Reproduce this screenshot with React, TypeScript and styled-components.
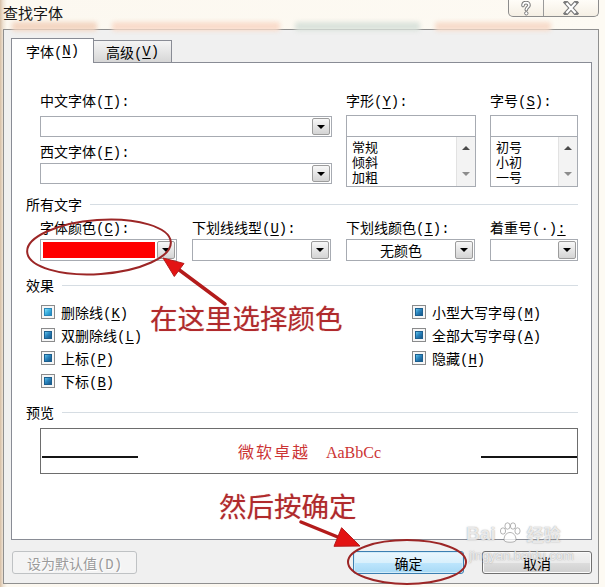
import React from 'react';
import styled, { createGlobalStyle } from 'styled-components';

const UI = `"Liberation Mono", "Noto Sans CJK SC", monospace`;
const CJK = `"Noto Sans CJK SC", sans-serif`;

const GlobalStyle = createGlobalStyle`
  html, body { margin: 0; padding: 0; background: #fcf8f0; }
  * { box-sizing: border-box; }
`;

const Screen = styled.div`
  position: relative;
  width: 605px;
  height: 587px;
  overflow: hidden;
  display: flex;
  flex-direction: column;
  background: linear-gradient(90deg, #d6bea5 0px, #efe3d4 3px, #fcf8f0 7px, #fdfaf3 100%);
  font-family: ${UI};
  font-size: 14px;
  color: #000;
`;

const TitleBar = styled.div`
  flex: none;
  height: 29px;
  display: flex;
  flex-direction: column;
`;

const TitleRow = styled.div`
  height: 21px;
  display: flex;
  justify-content: space-between;
  align-items: flex-start;
  padding: 0 6px 0 3px;
`;

const Title = styled.div`
  font-family: ${CJK};
  font-size: 15px;
  line-height: 20px;
  padding-top: 3px;
  color: #141414;
`;

const CaptionGroup = styled.div`
  display: flex;
  height: 17px;
  border: 1px solid #8c8c8c;
  border-top: none;
  border-radius: 0 0 5px 5px;
  background: linear-gradient(#fffdf8, #f5efe4);
  overflow: hidden;
`;

const CaptionButton = styled.div<{ $w: number }>`
  width: ${(p) => p.$w}px;
  display: flex;
  align-items: center;
  justify-content: center;
  & + & {
    border-left: 1px solid #9a9a9a;
  }
`;

const Backdrop = styled.div`
  height: 8px;
  display: flex;
  align-items: flex-start;
  gap: 15px;
  padding-left: 12px;
`;

const BackdropChip = styled.div<{ $w: number; $c: string }>`
  width: ${(p) => p.$w}px;
  height: 9px;
  margin-top: 1px;
  background: ${(p) => p.$c};
  filter: blur(2px);
  border-radius: 3px;
`;

const Frame = styled.div`
  flex: 1;
  margin: 0 6px 3px 3px;
  border: 1px solid #8f8f8f;
  background: #f0f0f0;
  display: flex;
  flex-direction: column;
  padding: 8px 6px 9px 7px;
`;

const TabStrip = styled.div`
  flex: none;
  height: 25px;
  margin-bottom: -1px;
  display: flex;
  align-items: flex-end;
  position: relative;
  z-index: 1;
`;

const Tab = styled.div<{ $active?: boolean }>`
  display: flex;
  align-items: center;
  justify-content: center;
  white-space: nowrap;
  border: 1px solid #898c95;
  ${(p) =>
    p.$active
      ? `
    width: 83px;
    height: 25px;
    border-bottom: none;
    background: #fff;
  `
      : `
    width: 78px;
    height: 22px;
    margin-bottom: 1px;
    border-left: none;
    border-bottom: none;
    background: linear-gradient(#f4f4f4, #e6e6e6 50%, #d6d6d6);
  `}
`;

const Panel = styled.div`
  flex: 1;
  background: #fff;
  border: 1px solid #898c95;
  display: flex;
  flex-direction: column;
  padding: 0 13px 0 14px;
`;

const FontGrid = styled.div`
  margin: 31px 0 0 14px;
  display: grid;
  grid-template-columns: 292px 130px 88px;
  column-gap: 14px;
`;

const FieldColumn = styled.div`
  display: flex;
  flex-direction: column;
  min-width: 0;
`;

const FieldLabel = styled.div<{ $mt?: number }>`
  height: 16px;
  line-height: 16px;
  white-space: nowrap;
  margin-top: ${(p) => p.$mt ?? 0}px;
`;

const Key = styled.span`
  text-decoration: underline;
  text-underline-offset: 2px;
`;

const Combo = styled.div<{ $h: number; $mt: number }>`
  height: ${(p) => p.$h}px;
  margin-top: ${(p) => p.$mt}px;
  border: 1px solid #a7abb2;
  background: #fff;
  display: flex;
  align-items: stretch;
  padding: 1px;
`;

const ComboValue = styled.div<{ $center?: boolean }>`
  flex: 1;
  display: flex;
  align-items: center;
  justify-content: ${(p) => (p.$center ? 'center' : 'flex-start')};
  font-family: ${CJK};
  font-size: 14px;
  padding: 1px 2px 1px 1px;
`;

const ColorSwatch = styled.div<{ $color: string }>`
  flex: 1;
  align-self: stretch;
  margin: 1px 2px 1px 1px;
  background: ${(p) => p.$color};
`;

const DropButton = styled.div`
  width: 18px;
  border: 1px solid #9c9c9c;
  border-radius: 2px;
  background: linear-gradient(#f8f8f8, #e4e4e4 55%, #d4d4d4);
  display: flex;
  align-items: center;
  justify-content: center;
`;

const Caret = styled.span`
  width: 0;
  height: 0;
  border-left: 4px solid transparent;
  border-right: 4px solid transparent;
  border-top: 4px solid #000;
`;

const TextBox = styled.div<{ $mt: number }>`
  height: 22px;
  margin-top: ${(p) => p.$mt}px;
  border: 1px solid #a7abb2;
  background: #fff;
`;

const ListBox = styled.div`
  height: 51px;
  margin-top: -1px;
  border: 1px solid #a7abb2;
  background: #fff;
  display: flex;
`;

const ListItems = styled.div`
  flex: 1;
  padding: 2px 0 0 5px;
  font-family: ${CJK};
  font-size: 13px;
  line-height: 15px;
`;

const ScrollColumn = styled.div`
  width: 19px;
  background: #f3f3f3;
  border-left: 1px solid #e2e2e2;
  display: flex;
  flex-direction: column;
  justify-content: space-between;
  align-items: center;
  padding: 9px 0 10px;
`;

const ScrollArrow = styled.span<{ $up?: boolean }>`
  width: 0;
  height: 0;
  border-left: 4px solid transparent;
  border-right: 4px solid transparent;
  ${(p) => (p.$up ? 'border-bottom: 4px solid #4a4a4a;' : 'border-top: 4px solid #8c8c8c;')}
`;

const SectionHeader = styled.div<{ $mt: number }>`
  margin-top: ${(p) => p.$mt}px;
  height: 16px;
  line-height: 16px;
  display: flex;
  align-items: center;
  gap: 8px;
  font-family: ${CJK};
  font-size: 14px;
`;

const Rule = styled.div`
  flex: 1;
  height: 1px;
  background: #d6dde3;
`;

const ColorRow = styled.div`
  margin: 9px 0 0 14px;
  display: flex;
  justify-content: space-between;
`;

const ColorField = styled.div<{ $w: number }>`
  width: ${(p) => p.$w}px;
  display: flex;
  flex-direction: column;
`;

const Effects = styled.div`
  margin: 7px 0 0 14px;
  display: flex;
`;

const EffectColumn = styled.div<{ $w?: number }>`
  ${(p) => (p.$w ? `width: ${p.$w}px;` : 'flex: 1;')}
  display: flex;
  flex-direction: column;
`;

const EffectRow = styled.div`
  height: 23px;
  display: flex;
  align-items: center;
  gap: 6px;
  padding-left: 1px;
  white-space: nowrap;
`;

const CheckBox = styled.span<{ $hot?: boolean }>`
  width: 14px;
  height: 14px;
  border: 1px solid #8a8b8c;
  background: #f6f6f6;
  padding: 2px;
  display: flex;
  &::after {
    content: '';
    flex: 1;
    border: 1px solid ${(p) => (p.$hot ? '#2a86b8' : '#1d5f8e')};
    background: ${(p) =>
      p.$hot
        ? 'linear-gradient(135deg, #8fe2f8 0%, #3fb4e2 45%, #1f86c0 100%)'
        : 'linear-gradient(135deg, #62c3e8 0%, #2a84be 45%, #175889 100%)'};
  }
`;

const PreviewBox = styled.div`
  margin: 8px 0 0 14px;
  height: 46px;
  border: 1px solid #6d6d6d;
  display: flex;
  align-items: flex-start;
  padding-left: 1px;
`;

const BaseLine = styled.div`
  width: 96px;
  margin-top: 27px;
  border-top: 2px solid #151515;
`;

const SampleText = styled.div`
  flex: 1;
  display: flex;
  justify-content: center;
  align-items: baseline;
  gap: 18px;
  margin-top: 12px;
  line-height: 20px;
  color: #cc3434;
  white-space: nowrap;
`;

const SampleCjk = styled.span`
  font-family: ${CJK};
  font-size: 16px;
  letter-spacing: 2px;
  margin-right: -2px;
`;

const SampleLatin = styled.span`
  font-family: "Liberation Serif", serif;
  font-size: 16px;
`;

const ButtonRow = styled.div`
  flex: none;
  margin-top: 11px;
  height: 23px;
  display: flex;
`;

const DialogButton = styled.div<{ $w: number; $kind: 'disabled' | 'default' | 'normal'; $ml?: string }>`
  width: ${(p) => p.$w}px;
  height: 23px;
  margin-left: ${(p) => p.$ml ?? '0'};
  display: flex;
  align-items: center;
  justify-content: center;
  border-radius: 3px;
  white-space: nowrap;
  font-size: 14px;
  ${(p) =>
    p.$kind === 'disabled'
      ? `
    border: 1px solid #bfc2c4;
    background: #f4f4f4;
    color: #9a9a9a;
    text-shadow: 1px 1px 0 #ffffff;
  `
      : p.$kind === 'default'
      ? `
    border: 1px solid #3c7fb1;
    box-shadow: inset 0 0 0 1px #d2ecf9;
    background: linear-gradient(#eaf6fd 0%, #d9f0fc 50%, #bee6fd 50%, #a7d9f5 100%);
    color: #000;
  `
      : `
    border: 1px solid #707070;
    box-shadow: inset 0 0 0 1px #fbfbfb;
    background: linear-gradient(#f2f2f2 0%, #ebebeb 50%, #dddddd 50%, #cfcfcf 100%);
    color: #000;
  `}
`;

const Overlay = styled.svg`
  position: absolute;
  left: 0;
  top: 0;
  pointer-events: none;
`;

const Annotation = styled.div<{ $x: number; $y: number }>`
  position: absolute;
  left: ${(p) => p.$x}px;
  top: ${(p) => p.$y}px;
  font-family: ${CJK};
  font-size: 27.5px;
  line-height: 28px;
  color: #b02a2c;
  white-space: nowrap;
  text-shadow: 0 0 1px rgba(176, 42, 44, 0.4);
`;

const Watermark = styled.div`
  position: absolute;
  left: 466px;
  top: 521px;
  display: flex;
  flex-direction: column;
  color: rgba(255, 255, 255, 0.75);
  text-shadow: 0 0 1px rgba(110, 110, 110, 0.55), 0 0 2px rgba(150, 150, 150, 0.35);
  pointer-events: none;
`;

const WatermarkTop = styled.div`
  display: flex;
  align-items: flex-end;
  gap: 2px;
  font-family: "Liberation Sans", sans-serif;
  font-weight: bold;
  font-size: 19px;
  line-height: 22px;
`;

const WatermarkCn = styled.span`
  font-family: ${CJK};
  font-size: 17px;
  font-weight: bold;
  margin-left: 3px;
`;

const WatermarkUrl = styled.div`
  font-family: "Liberation Sans", sans-serif;
  font-size: 13px;
  line-height: 16px;
  margin-top: 3px;
  padding-left: 3px;
`;

const HelpIcon = () => (
  <svg width="12" height="15" viewBox="0 0 12 15">
    <path
      d="M3 4.6 C3 2.2 4.5 1.6 6 1.6 C7.6 1.6 9 2.3 9 4.2 C9 6.2 6.3 6.4 6.3 8.8"
      fill="none"
      stroke="#7b7b7b"
      strokeWidth="3.6"
      strokeLinecap="round"
    />
    <path
      d="M3 4.6 C3 2.2 4.5 1.6 6 1.6 C7.6 1.6 9 2.3 9 4.2 C9 6.2 6.3 6.4 6.3 8.8"
      fill="none"
      stroke="#ffffff"
      strokeWidth="1.6"
      strokeLinecap="round"
    />
    <circle cx="6.3" cy="12.3" r="1.7" fill="#fff" stroke="#7b7b7b" strokeWidth="1" />
  </svg>
);

const CloseIcon = () => (
  <svg width="16" height="14" viewBox="0 0 16 14">
    <path d="M3 1.5 L13 12.5 M13 1.5 L3 12.5" stroke="#7b7b7b" strokeWidth="4.4" strokeLinecap="square" fill="none" />
    <path d="M3.4 2 L12.6 12 M12.6 2 L3.4 12" stroke="#ffffff" strokeWidth="2.2" strokeLinecap="butt" fill="none" />
  </svg>
);

const PawIcon = () => (
  <svg width="24" height="24" viewBox="0 0 24 24">
    <g fill="rgba(255,255,255,0.75)" stroke="rgba(120,120,120,0.55)" strokeWidth="1">
      <ellipse cx="5" cy="10" rx="2.6" ry="3.2" />
      <ellipse cx="9.5" cy="5" rx="2.6" ry="3.2" />
      <ellipse cx="15" cy="5" rx="2.6" ry="3.2" />
      <ellipse cx="19.5" cy="10" rx="2.6" ry="3.2" />
      <path d="M6 19 C6 14 9 11.5 12 11.5 C15 11.5 18 14 18 19 C18 22 6 22 6 19 Z" />
    </g>
  </svg>
);

const Dropdown = ({ h, mt, children, center }: { h: number; mt: number; children?: React.ReactNode; center?: boolean }) => (
  <Combo $h={h} $mt={mt}>
    <ComboValue $center={center}>{children}</ComboValue>
    <DropButton>
      <Caret />
    </DropButton>
  </Combo>
);

const ListField = ({ label, items }: { label: React.ReactNode; items: string[] }) => (
  <FieldColumn>
    <FieldLabel>{label}</FieldLabel>
    <TextBox $mt={5} />
    <ListBox>
      <ListItems>
        {items.map((it) => (
          <div key={it}>{it}</div>
        ))}
      </ListItems>
      <ScrollColumn>
        <ScrollArrow $up />
        <ScrollArrow />
      </ScrollColumn>
    </ListBox>
  </FieldColumn>
);

const Effect = ({ text, k, hot }: { text: string; k: string; hot?: boolean }) => (
  <EffectRow>
    <CheckBox $hot={hot} />
    <span>
      {text}(<Key>{k}</Key>)
    </span>
  </EffectRow>
);

export default function App() {
  return (
    <Screen>
      <GlobalStyle />
      <TitleBar>
        <TitleRow>
          <Title>查找字体</Title>
          <CaptionGroup>
            <CaptionButton $w={34}>
              <HelpIcon />
            </CaptionButton>
            <CaptionButton $w={55}>
              <CloseIcon />
            </CaptionButton>
          </CaptionGroup>
        </TitleRow>
        <Backdrop>
          <BackdropChip $w={85} $c="#f3d6c2" />
          <BackdropChip $w={168} $c="#f9dccb" />
          <BackdropChip $w={125} $c="#dbe3dc" />
          <BackdropChip $w={116} $c="#f7dccb" />
        </Backdrop>
      </TitleBar>

      <Frame>
        <TabStrip>
          <Tab $active>
            字体(<Key>N</Key>)
          </Tab>
          <Tab>
            高级(<Key>V</Key>)
          </Tab>
        </TabStrip>

        <Panel>
          <FontGrid>
            <FieldColumn>
              <FieldLabel>
                中文字体(<Key>T</Key>):
              </FieldLabel>
              <Dropdown h={21} mt={6} />
              <FieldLabel $mt={8}>
                西文字体(<Key>F</Key>):
              </FieldLabel>
              <Dropdown h={21} mt={2} />
            </FieldColumn>
            <ListField
              label={
                <>
                  字形(<Key>Y</Key>):
                </>
              }
              items={['常规', '倾斜', '加粗']}
            />
            <ListField
              label={
                <>
                  字号(<Key>S</Key>):
                </>
              }
              items={['初号', '小初', '一号']}
            />
          </FontGrid>

          <SectionHeader $mt={9}>
            <span>所有文字</span>
            <Rule />
          </SectionHeader>

          <ColorRow>
            <ColorField $w={137}>
              <FieldLabel>
                字体颜色(<Key>C</Key>):
              </FieldLabel>
              <Combo $h={22} $mt={2}>
                <ColorSwatch $color="#ff0000" />
                <DropButton>
                  <Caret />
                </DropButton>
              </Combo>
            </ColorField>
            <ColorField $w={139}>
              <FieldLabel>
                下划线线型(<Key>U</Key>):
              </FieldLabel>
              <Dropdown h={22} mt={2} />
            </ColorField>
            <ColorField $w={129}>
              <FieldLabel>
                下划线颜色(<Key>I</Key>):
              </FieldLabel>
              <Dropdown h={22} mt={2} center>
                无颜色
              </Dropdown>
            </ColorField>
            <ColorField $w={88}>
              <FieldLabel>
                着重号(·)<Key>:</Key>
              </FieldLabel>
              <Dropdown h={22} mt={2} />
            </ColorField>
          </ColorRow>

          <SectionHeader $mt={16}>
            <span>效果</span>
            <Rule />
          </SectionHeader>

          <Effects>
            <EffectColumn $w={371}>
              <Effect text="删除线" k="K" hot />
              <Effect text="双删除线" k="L" />
              <Effect text="上标" k="P" />
              <Effect text="下标" k="B" />
            </EffectColumn>
            <EffectColumn>
              <Effect text="小型大写字母" k="M" />
              <Effect text="全部大写字母" k="A" />
              <Effect text="隐藏" k="H" />
            </EffectColumn>
          </Effects>

          <SectionHeader $mt={12}>
            <span>预览</span>
            <Rule />
          </SectionHeader>

          <PreviewBox>
            <BaseLine />
            <SampleText>
              <SampleCjk>微软卓越</SampleCjk>
              <SampleLatin>AaBbCc</SampleLatin>
            </SampleText>
            <BaseLine />
          </PreviewBox>
        </Panel>

        <ButtonRow>
          <DialogButton $w={125} $kind="disabled" $ml="1px">
            设为默认值(D)
          </DialogButton>
          <DialogButton $w={111} $kind="default" $ml="auto">
            确定
          </DialogButton>
          <DialogButton $w={110} $kind="normal" $ml="18px">
            取消
          </DialogButton>
        </ButtonRow>
      </Frame>

      <Overlay width="605" height="587" viewBox="0 0 605 587">
        <ellipse
          cx="99"
          cy="247"
          rx="72"
          ry="27"
          transform="rotate(-4 99 247)"
          fill="none"
          stroke="#9c2626"
          strokeWidth="2"
        />
        <line x1="225" y1="304" x2="178" y2="269" stroke="#b31b1b" strokeWidth="3.5" strokeLinecap="round" />
        <polygon points="163,258 184,263.5 174.3,276.5" fill="#e31414" stroke="#b31b1b" strokeWidth="1" />
        <line x1="301" y1="522" x2="339" y2="537.5" stroke="#b31b1b" strokeWidth="3.5" strokeLinecap="round" />
        <polygon points="360,546 334,546.3 341.6,527.7" fill="#e31414" stroke="#b31b1b" strokeWidth="1" />
        <ellipse cx="407" cy="562" rx="59" ry="22" fill="none" stroke="#9c2626" strokeWidth="2" />
      </Overlay>

      <Annotation $x={150} $y={303}>在这里选择颜色</Annotation>
      <Annotation $x={219} $y={491}>然后按确定</Annotation>

      <Watermark>
        <WatermarkTop>
          <span>Bai</span>
          <PawIcon />
          <WatermarkCn>经验</WatermarkCn>
        </WatermarkTop>
        <WatermarkUrl>jingyan.baidu.com</WatermarkUrl>
      </Watermark>
    </Screen>
  );
}
